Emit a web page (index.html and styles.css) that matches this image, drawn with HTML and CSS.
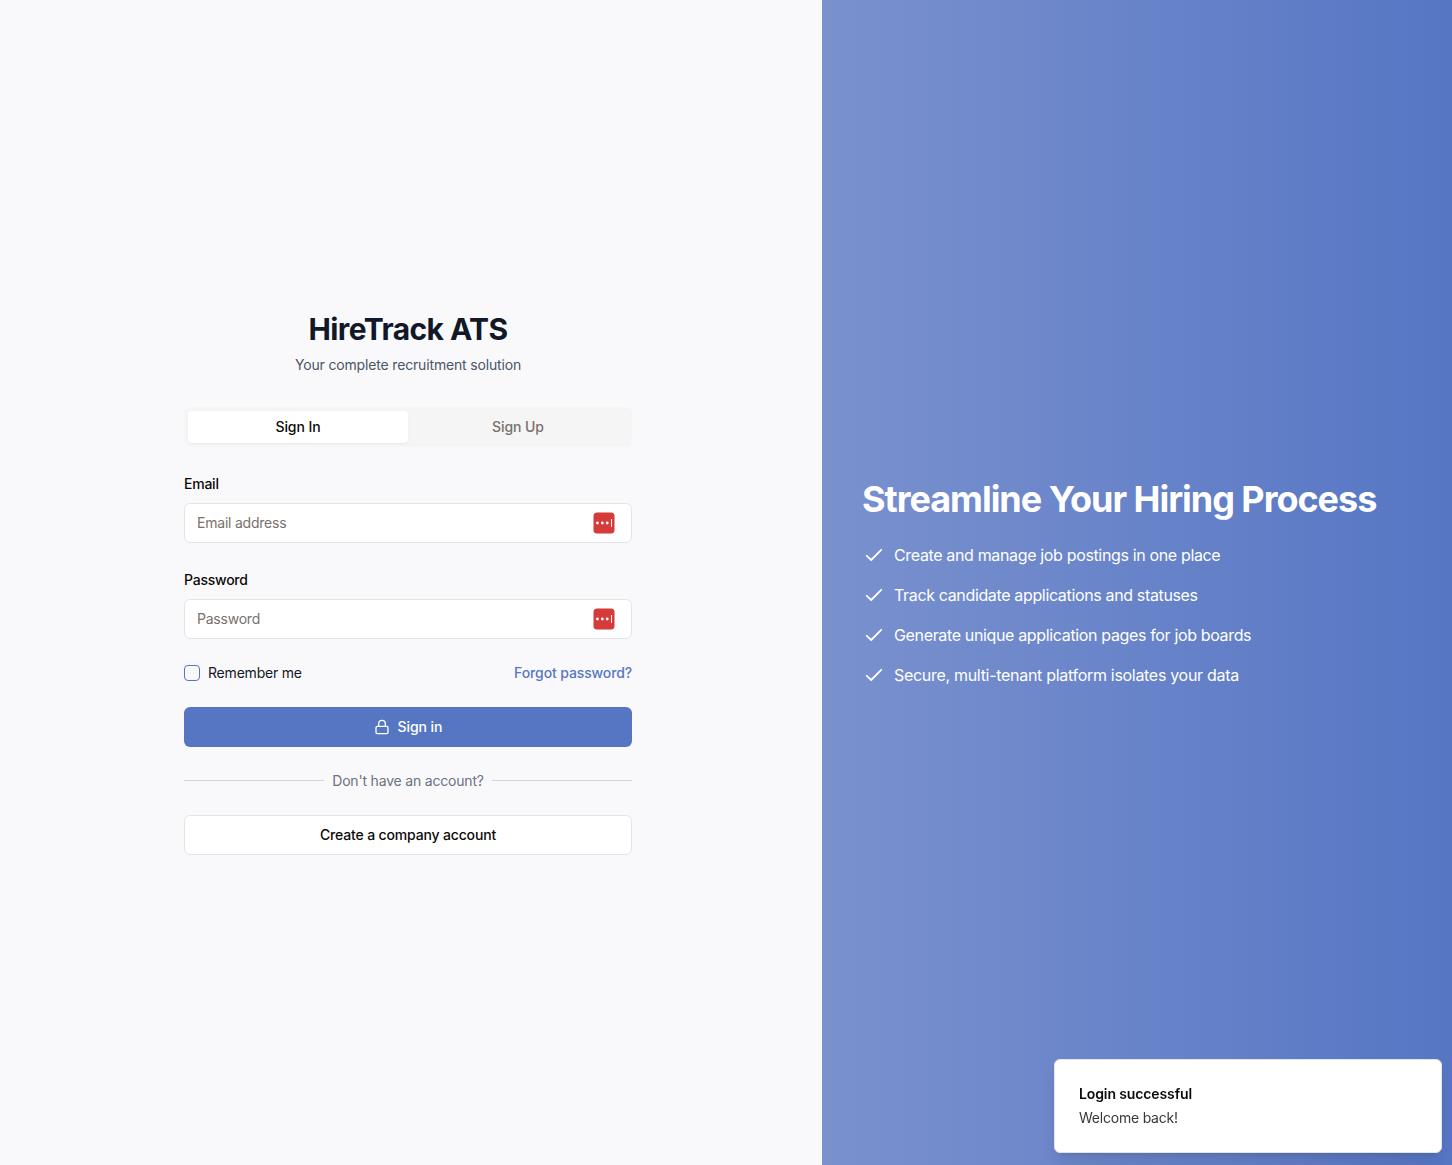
FILE: index.html
```html
<!DOCTYPE html>
<html lang="en">
<head>
<meta charset="utf-8">
<title>HireTrack ATS</title>
<link rel="stylesheet" href="styles.css">
</head>
<body>
<main class="page">
  <section class="auth">
    <div class="auth-inner">
      <h1 class="brand">HireTrack ATS</h1>
      <p class="tagline">Your complete recruitment solution</p>
      <div class="tabs">
        <button class="tab tab-active" type="button">Sign In</button>
        <button class="tab" type="button">Sign Up</button>
      </div>
      <form class="form">
        <div class="field">
          <label class="label" for="email">Email</label>
          <div class="input-box">
            <input class="input" id="email" type="email" placeholder="Email address">
            <svg class="badge" viewBox="0 0 22 22"><rect x=".5" y=".5" width="21" height="21" rx="3.5" fill="#d63b3a"/><g fill="#fff"><circle cx="4.4" cy="11" r="1.4"/><circle cx="9.3" cy="11" r="1.4"/><circle cx="14.2" cy="11" r="1.4"/><rect x="18" y="7" width="1" height="8"/></g></svg>
          </div>
        </div>
        <div class="field">
          <label class="label" for="password">Password</label>
          <div class="input-box">
            <input class="input" id="password" type="password" placeholder="Password">
            <svg class="badge" viewBox="0 0 22 22"><rect x=".5" y=".5" width="21" height="21" rx="3.5" fill="#d63b3a"/><g fill="#fff"><circle cx="4.4" cy="11" r="1.4"/><circle cx="9.3" cy="11" r="1.4"/><circle cx="14.2" cy="11" r="1.4"/><rect x="18" y="7" width="1" height="8"/></g></svg>
          </div>
        </div>
        <div class="options">
          <label class="remember"><span class="checkbox"></span><span>Remember me</span></label>
          <a class="forgot">Forgot password?</a>
        </div>
        <button class="btn btn-primary" type="button">
          <svg class="lock" viewBox="0 0 24 24"><rect x="3" y="11" width="18" height="11" rx="2"/><path d="M7 11V7a5 5 0 0 1 10 0v4"/></svg>
          <span>Sign in</span>
        </button>
        <div class="divider"><span>Don't have an account?</span></div>
        <button class="btn btn-outline" type="button">Create a company account</button>
      </form>
    </div>
  </section>
  <section class="promo">
    <h2 class="promo-title">Streamline Your Hiring Process</h2>
    <ul class="features">
      <li class="feature"><svg class="check" viewBox="0 0 24 24"><path d="M4.8 12.8 9.2 17 19.2 6.8"/></svg><span>Create and manage job postings in one place</span></li>
      <li class="feature"><svg class="check" viewBox="0 0 24 24"><path d="M4.8 12.8 9.2 17 19.2 6.8"/></svg><span>Track candidate applications and statuses</span></li>
      <li class="feature"><svg class="check" viewBox="0 0 24 24"><path d="M4.8 12.8 9.2 17 19.2 6.8"/></svg><span>Generate unique application pages for job boards</span></li>
      <li class="feature feature-wide"><svg class="check" viewBox="0 0 24 24"><path d="M4.8 12.8 9.2 17 19.2 6.8"/></svg><span>Secure, multi-tenant platform isolates your data</span></li>
    </ul>
  </section>
</main>
<div class="toast" role="status">
  <div class="toast-title">Login successful</div>
  <div class="toast-text">Welcome back!</div>
</div>
</body>
</html>
```

FILE: styles.css
```css
* { box-sizing: border-box; margin: 0; padding: 0; }
body { font-family: Inter, sans-serif; font-size: 14px; line-height: 20px; letter-spacing: -0.16px; color: #0c0a09; }
button, input { font: inherit; letter-spacing: inherit; color: inherit; border: 0; }
.page { display: grid; grid-template-columns: 822px 1fr; height: 1165px; }
.auth { display: flex; flex-direction: column; justify-content: center; align-items: center; padding: 1px 6px 0 0; background: #f9f9fc; }
.auth-inner { width: 448px; }
.brand { font-size: 30px; line-height: 36px; font-weight: 700; letter-spacing: -0.58px; text-align: center; color: #111827; }
.tagline { margin-top: 8px; text-align: center; color: #4b5563; }
.tabs { display: grid; grid-template-columns: 1fr 1fr; height: 40px; margin-top: 32px; padding: 4px; border-radius: 6px; background: #f5f5f5; }
.tab { border-radius: 4px; background: transparent; font-weight: 500; letter-spacing: -0.08px; color: #78716c; }
.tab-active { background: #fff; color: #0c0a09; box-shadow: 0 1px 2px rgba(0, 0, 0, .06); }
.form { display: flex; flex-direction: column; gap: 24px; margin-top: 24px; }
.field { display: flex; flex-direction: column; gap: 6px; height: 72px; }
.label { height: 26px; line-height: 26px; font-weight: 500; letter-spacing: -0.24px; }
.input-box { display: flex; align-items: center; height: 40px; padding: 0 16px 0 12px; border: 1px solid #e4e4e7; border-radius: 6px; background: #fff; }
.input { flex: 1; min-width: 0; background: transparent; outline: 0; letter-spacing: -0.22px; }
.input::placeholder { color: #78716c; opacity: 1; }
.badge { width: 22px; height: 22px; }
.options { display: flex; justify-content: space-between; height: 20px; }
.remember { display: flex; align-items: center; gap: 8px; letter-spacing: -0.2px; color: #111827; }
.checkbox { width: 16px; height: 16px; border: 1px solid #5676c4; border-radius: 4px; }
.forgot { font-weight: 500; letter-spacing: -0.12px; color: #5676c4; }
.btn { display: flex; align-items: center; justify-content: center; gap: 8px; height: 40px; border-radius: 6px; font-weight: 500; }
.btn-primary { background: #5676c4; letter-spacing: -0.08px; color: #fff; }
.btn-outline { border: 1px solid #e4e4e7; background: #fff; }
.lock { width: 16px; height: 16px; }
.lock, .check { fill: none; stroke: currentColor; stroke-linecap: round; stroke-linejoin: round; }
.lock { stroke-width: 2; }
.divider { display: flex; align-items: center; gap: 8px; height: 20px; letter-spacing: -0.19px; color: #6b7280; }
.divider::before, .divider::after { content: ""; flex: 1; height: 1px; margin-bottom: 1px; background: #d1d5db; }
.promo { display: flex; flex-direction: column; justify-content: center; padding: 1px 40px 0; color: #fff; background: linear-gradient(90deg, #7a91ce, #5676c4); }
.promo-title { font-size: 36px; line-height: 40px; font-weight: 700; letter-spacing: -1.03px; white-space: nowrap; }
.features { display: flex; flex-direction: column; gap: 16px; margin-top: 24px; list-style: none; }
.feature { display: flex; align-items: center; gap: 8px; font-size: 16px; line-height: 24px; letter-spacing: -0.35px; white-space: nowrap; }
.feature-wide { letter-spacing: -0.3px; }
.check { width: 24px; height: 24px; stroke-width: 1.8; }
.toast { position: fixed; right: 10px; bottom: 12px; width: 388px; height: 94px; display: flex; flex-direction: column; justify-content: center; gap: 4px; padding: 0 24px; border: 1px solid #e4e4e7; border-radius: 6px; background: #fff; box-shadow: 0 10px 15px -3px rgba(0, 0, 0, .1), 0 4px 6px -4px rgba(0, 0, 0, .1); }
.toast-title { font-weight: 600; letter-spacing: -0.12px; }
.toast-text { letter-spacing: -0.22px; color: #3a3837; }
```
